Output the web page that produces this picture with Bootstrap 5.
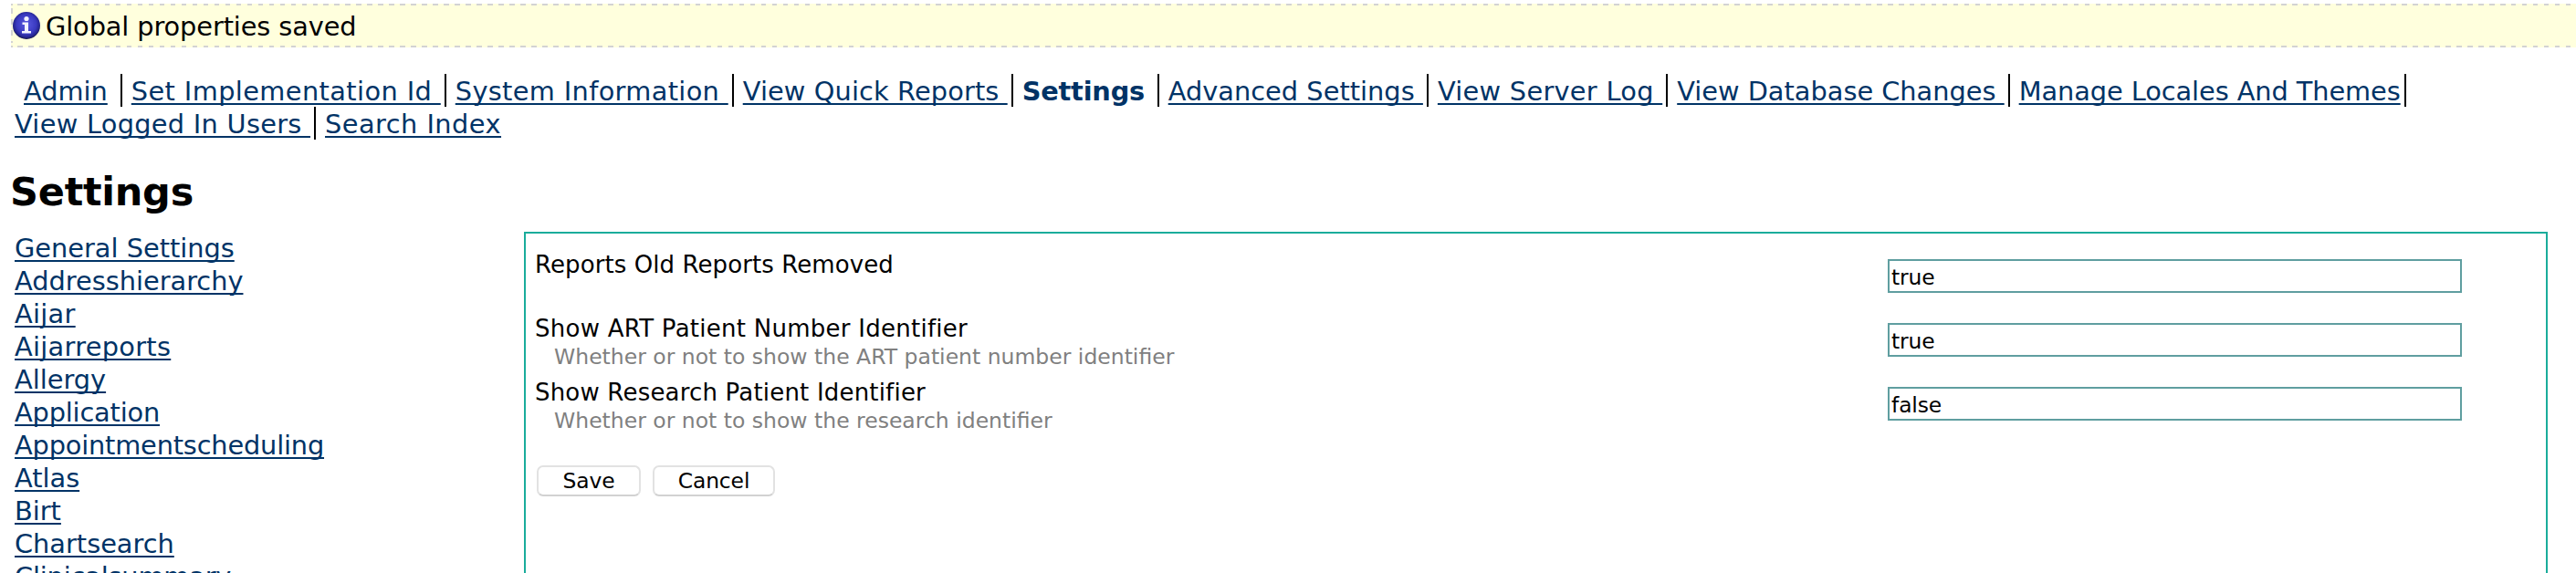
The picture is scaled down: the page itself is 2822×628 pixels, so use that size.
<!DOCTYPE html>
<html lang="en">
<head>
<meta charset="utf-8">
<title>Settings</title>
<link href="https://cdn.jsdelivr.net/npm/bootstrap@5.3.0/dist/css/bootstrap.min.css" rel="stylesheet">
<style>
body { font-family: "DejaVu Sans", Verdana, sans-serif; font-size: 28.8px; line-height: 36px; color: #000; background: #fff; height: 628px; overflow: hidden; }
a { color: #003366; text-decoration: underline; text-decoration-thickness: 2px; text-underline-offset: 3px; text-decoration-skip-ink: none; }
a:hover { color: #003366; }
.notice {
  --dash: #d3d3d3 0 5.6px, transparent 5.6px 11.982px;
  margin: 4px 0 0 12px; height: 48px; padding-left: 2px; letter-spacing: -.1px;
  background:
    repeating-linear-gradient(90deg, var(--dash)) 7.3px 0 / 100% 2px no-repeat,
    repeating-linear-gradient(90deg, var(--dash)) 7.3px 100% / 100% 2px no-repeat,
    linear-gradient(#d3d3d3, #d3d3d3) 0 0 / 2px 2px no-repeat,
    linear-gradient(#d3d3d3, #d3d3d3) 0 100% / 2px 2px no-repeat,
    repeating-linear-gradient(180deg, var(--dash)) 0 5px / 2px 38px no-repeat,
    #ffffdd;
}
.notice svg { width: 30px; height: 30px; margin-right: 6px; }
.notice span { padding-top: 1px; }
.admin-menu { margin: 29px 0 0 16px; }
.admin-menu li { height: 36px; line-height: 38px; white-space: pre; border-left: 2px solid #000; padding: 0 4px 0 10px; }
.admin-menu li.start { border-left: 0; padding-left: 0; }
.m-admin { margin-left: 10px; margin-right: 10px; }
.m-impl { letter-spacing: .4px; }
.m-info { letter-spacing: .345px; }
.m-quick { letter-spacing: .12px; }
.m-set { letter-spacing: -.2px; width: 160px; color: #003366; }
.m-adv { letter-spacing: .03px; }
.m-log { letter-spacing: .29px; }
.m-themes { letter-spacing: -.07px; border-right: 2px solid #000; }
.m-users { letter-spacing: .285px; }
.m-index { letter-spacing: .47px; }
h2 { font-size: 43px; line-height: 52px; font-weight: 700; letter-spacing: -.25px; margin: 31px 0 0 11px; }
.main-area { margin-top: 18px; height: 374px; overflow: hidden; }
.side-links { width: 558px; margin-left: 16px; }
.side-links .wide { letter-spacing: .3px; }
.side-links .tight { letter-spacing: -.17px; }
.panel-box { width: 2217px; height: 500px; border: 2px solid #1aac9b; padding: 18px 0 0 10px; }
.prop { height: 70px; }
.prop-text { width: 1482px; }
.prop-name { font-size: 26px; line-height: 32px; letter-spacing: .19px; }
.n-reports { letter-spacing: .09px; }
.n-art { letter-spacing: .26px; }
.prop-help { font-size: 23.5px; line-height: 30px; color: #808080; padding-left: 21px; letter-spacing: 0; }
.prop input { width: 629px; height: 37px; margin-top: 10px; border: 2px solid #5f9ea0; border-radius: 0; padding: 2px 2px 0; font-size: 23.4px; line-height: 30px; color: #000; background: #fff; letter-spacing: -.1px; }
.actions { margin: 26px 0 0 2px; gap: 13px; }
.actions .btn { height: 34px; padding: 0; border: 2px solid #e2e2e2; border-bottom-color: #d2d2d2; border-radius: 7px; background: #fff; color: #000; font-size: 23.4px; line-height: 29px; letter-spacing: -.1px; }
.b-save { width: 114px; } .b-cancel { width: 134px; }
</style>
</head>
<body>
<div class="notice d-flex align-items-center" role="status">
  <svg viewBox="0 0 30 30" aria-hidden="true">
    <defs><radialGradient id="ball" cx=".5" cy=".45" r=".55"><stop offset="0" stop-color="#5a5ae0"/><stop offset=".65" stop-color="#3a3ac0"/><stop offset=".88" stop-color="#24248c"/><stop offset="1" stop-color="#151540"/></radialGradient></defs>
    <circle cx="15" cy="15" r="15" fill="url(#ball)"/>
    <circle cx="15" cy="7.5" r="2.6" fill="#f2f2ff"/>
    <path d="M10.5 11.5H17V21h3v2.500H10V21h3v-7h-2.500z" fill="#f2f2ff"/>
  </svg>
  <span>Global properties saved</span>
</div>

<nav class="admin-menu">
  <ul class="list-unstyled d-flex mb-0">
    <li class="start m-admin"><a href="#">Admin</a></li>
    <li class="m-impl"><a href="#">Set Implementation Id </a></li>
    <li class="m-info"><a href="#">System Information </a></li>
    <li class="m-quick"><a href="#">View Quick Reports </a></li>
    <li class="m-set fw-bold">Settings</li>
    <li class="m-adv"><a href="#">Advanced Settings </a></li>
    <li class="m-log"><a href="#">View Server Log </a></li>
    <li><a href="#">View Database Changes </a></li>
    <li class="m-themes"><a href="#">Manage Locales And Themes</a></li>
  </ul>
  <ul class="list-unstyled d-flex mb-0">
    <li class="start m-users"><a href="#">View Logged In Users </a></li>
    <li class="m-index"><a href="#">Search Index</a></li>
  </ul>
</nav>

<h2>Settings</h2>

<div class="main-area d-flex align-items-start">
  <div class="side-links d-flex flex-column align-items-start flex-shrink-0">
    <a href="#">General Settings</a>
    <a href="#">Addresshierarchy</a>
    <a href="#" class="wide">Aijar</a>
    <a href="#" class="wide">Aijarreports</a>
    <a href="#">Allergy</a>
    <a href="#" class="tight">Application</a>
    <a href="#" class="tight">Appointmentscheduling</a>
    <a href="#">Atlas</a>
    <a href="#">Birt</a>
    <a href="#">Chartsearch</a>
    <a href="#" class="tight">Clinicalsummary</a>
  </div>
  <form class="panel-box flex-shrink-0">
    <div class="prop d-flex align-items-start">
      <div class="prop-text"><div class="prop-name n-reports">Reports Old Reports Removed</div></div>
      <input type="text" value="true">
    </div>
    <div class="prop d-flex align-items-start">
      <div class="prop-text"><div class="prop-name n-art">Show ART Patient Number Identifier</div><div class="prop-help">Whether or not to show the ART patient number identifier</div></div>
      <input type="text" value="true">
    </div>
    <div class="prop d-flex align-items-start">
      <div class="prop-text"><div class="prop-name">Show Research Patient Identifier</div><div class="prop-help">Whether or not to show the research identifier</div></div>
      <input type="text" value="false">
    </div>
    <div class="actions d-flex">
      <button type="button" class="btn b-save">Save</button>
      <button type="button" class="btn b-cancel">Cancel</button>
    </div>
  </form>
</div>
<script src="https://cdn.jsdelivr.net/npm/bootstrap@5.3.0/dist/js/bootstrap.bundle.min.js"></script>
</body>
</html>
